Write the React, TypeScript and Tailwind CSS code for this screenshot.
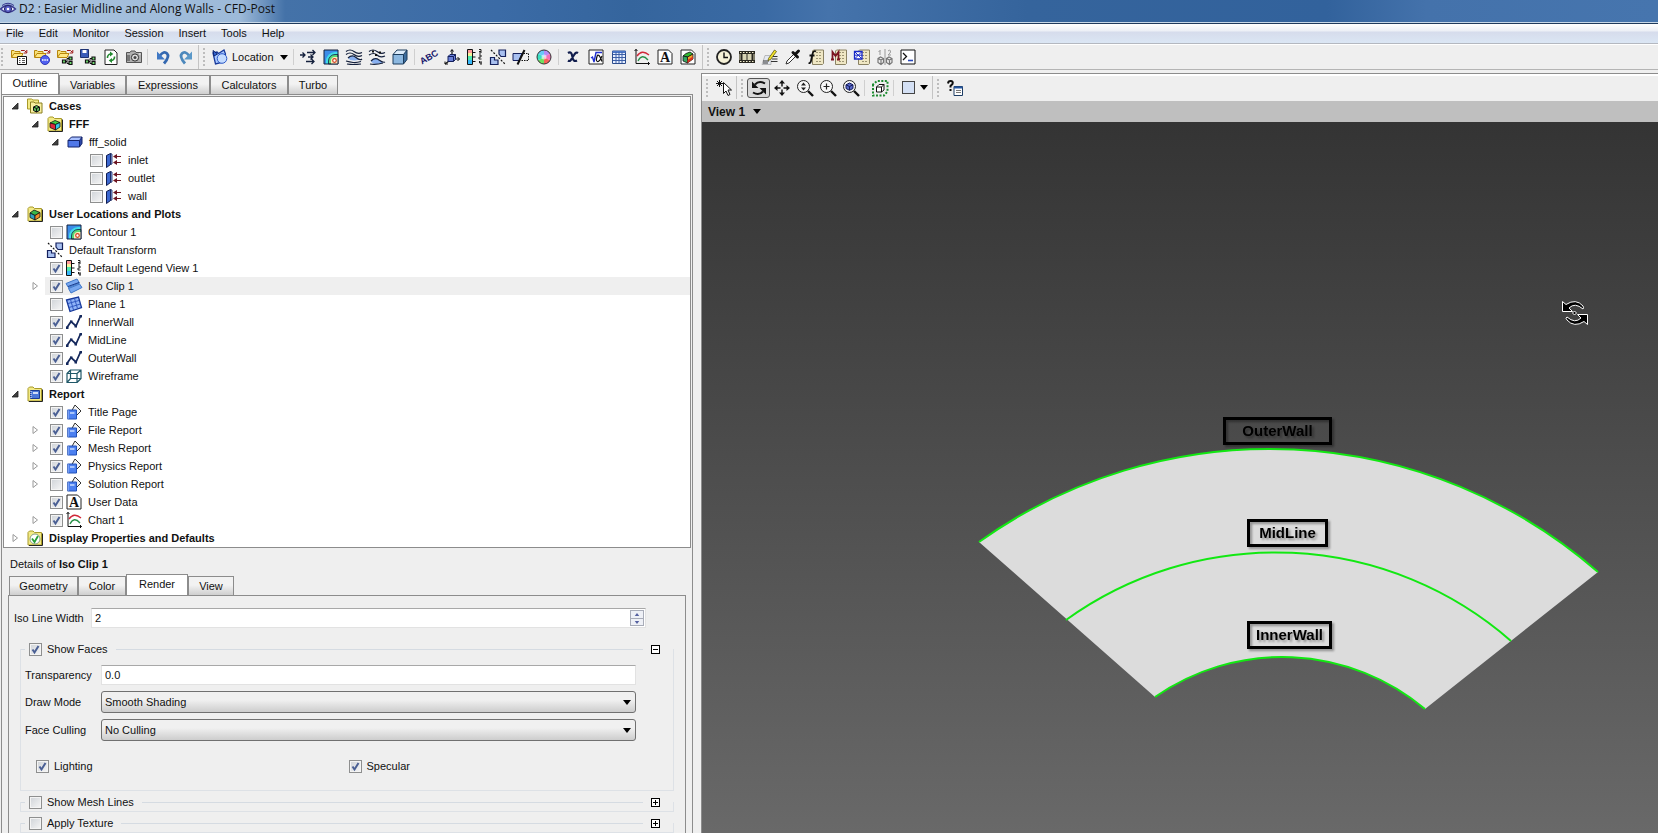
import { useState } from 'react';
import type { ReactNode } from 'react';
import clsx from 'clsx';

const folder = (
  <>
    <path d="M1 2.5 2.5 1H6l1.5 1.5h7V15H1z" fill="#f3ea86" stroke="#a89a2a" />
    <path d="M15.5 3.5v12H2" fill="none" stroke="#222" />
  </>
);

const openFolder = (
  <>
    <path d="M.5 8V1.5H3L4 2.5h5V4" fill="#f8e27a" stroke="#b8860b" />
    <path d="M.5 8.5 3 4.5h9L10 8.5z" fill="#ffe680" stroke="#b8860b" />
    <path d="M10 1.5h3.5l2 2M15.8 1v3h-3" fill="none" stroke="#a01818" />
  </>
);

const nodes = (
  <>
    <path d="M7 12.5h3M10 9.5v5M10 9.5h2M10 14.5h2" fill="none" stroke="#111" />
    <path d="M5.5 11h3v3h-3zM12 8h3v3h-3zM12 12.5h3v3h-3z" fill="#6fdc6f" stroke="#111" strokeWidth="1.2" />
  </>
);

const cube = (
  <>
    <path d="M3 7 8 4.5 13 6.5 8.5 8.5z" fill="#3fd03f" stroke="#111" strokeWidth=".8" />
    <path d="M3 7v4.5L8.5 14V8.5z" fill="#e0283c" stroke="#111" strokeWidth=".8" />
    <path d="M8.5 8.5V14L13 11V6.5z" fill="#35c8e8" stroke="#111" strokeWidth=".8" />
  </>
);

const sheet = <path d="M1 1h10.5L15 4.5V15H1z" fill="#fff" stroke="#222" />;

const calc = (
  <>
    <path d="M5.5 1h10v13.5l-1 1h-10V2z" fill="#efe7c4" stroke="#8a8263" />
    <path d="M8 3.5h6M8 6.5h6M8 9.5h6M8 12.5h6" stroke="#9c9474" strokeDasharray="2 1" />
  </>
);

const lens = (
  <>
    <circle cx="6.5" cy="6.5" r="6" fill="#f8f8f8" stroke="#222" />
    <path d="m11 11 5 5" stroke="#111" strokeWidth="2.4" />
  </>
);

const icons: Record<string, ReactNode> = {
  app: (
    <>
      <path d="M.5 8Q8 .5 15.5 8 8 15 .5 8z" fill="#e8ecff" stroke="#3a3a90" strokeWidth="1.4" />
      <circle cx="8" cy="8" r="3.6" fill="#5a60c8" stroke="#24246a" />
      <circle cx="8" cy="8" r="1.3" fill="#fff" />
      <path d="M2 4.5Q8 0 14 4.5" fill="none" stroke="#3a3a90" />
    </>
  ),
  loadResults: (
    <>
      {openFolder}
      <path d="M6.5 7.5h9v8h-9z" fill="#fff" stroke="#111" />
      <path d="M8 9.5h1.5M11 9.5h3M8 11.5h1.5M11 11.5h3M8 13.5h1.5M11 13.5h3" stroke="#555" />
    </>
  ),
  loadCase: (
    <>
      {openFolder}
      <circle cx="11" cy="11" r="4.5" fill="#5060f0" stroke="#3038b8" />
      <path d="M8 11h1.5M10.3 11h1.5M12.6 11h1.5" stroke="#fff" strokeWidth="1.4" />
    </>
  ),
  loadState: <>{openFolder}{nodes}</>,
  saveState: (
    <>
      <path d="M.5.5h8v8h-8z" fill="#3a5cb8" stroke="#1d3272" />
      <path d="M2.5 1h4v3h-4z" fill="#fff" />
      {nodes}
    </>
  ),
  refresh: (
    <>
      <path d="M2 1h9l3 3v11.5H2z" fill="#fff" stroke="#222" />
      <path d="M4.5 9a3.5 3.5 0 0 1 3-4M11.5 7.5a3.5 3.5 0 0 1-3 4" fill="none" stroke="#238a30" strokeWidth="1.6" />
      <path d="M7 2.5 10.3 5 7 7.5zM9 9 5.7 11.5 9 14z" fill="#238a30" />
    </>
  ),
  camera: (
    <>
      <path d="M.5 3.5H4L5 2h4l1 1.5h5.5v10H.5z" fill="#b0b0b0" stroke="#555" />
      <path d="M1 6h3v6H1z" fill="#777" />
      <circle cx="9" cy="8.5" r="3.6" fill="#ddd" stroke="#333" />
      <circle cx="9" cy="8.5" r="1.5" fill="#444" />
      <path d="M13 5h1.5" stroke="#fff" />
    </>
  ),
  undo: (
    <>
      <path d="M5 6.5Q9 1.5 12 4.5T9 14.5" fill="none" stroke="#3468b0" strokeWidth="2.8" />
      <path d="M2 2.5v8h8z" fill="#3f78c4" />
    </>
  ),
  redo: (
    <>
      <path d="M11 6.5Q7 1.5 4 4.5T7 14.5" fill="none" stroke="#4c88bc" strokeWidth="2.8" />
      <path d="M14 2.5v8H6z" fill="#5a98c8" />
    </>
  ),
  location: (
    <>
      <path d="m1 4 4-1 1.5 1.5L12 1l1.5 4-2 8-8 2z" fill="#a8c8ff" stroke="#16389a" strokeWidth="1.3" />
      <path d="M1 1.5 5.5 5 2 7z" fill="#3468d8" stroke="#0c2470" />
      <circle cx="10" cy="9.5" r="4.8" fill="#c4dcff" stroke="#2a58c8" />
    </>
  ),
  vector: (
    <path d="M0 6h5M2.5 3.500 5 6 2.500 8.500M7 3.500h8M12.500 1 15 3.500 12.500 6M8 8h5M10.500 5.500 13 8l-2.500 2.500M6 12.500h8M11.500 10l2.500 2.500-2.500 2.500" fill="none" stroke="#14203c" strokeWidth="1.3" />
  ),
  contour: (
    <>
      <path d="M1 1h14v14H1z" fill="#3c8ce8" />
      <path d="M3 15v-3a9 9 0 0 1 9-9h3v12z" fill="#40dce8" />
      <path d="M5.5 15v-3A6.500 6.500 0 0 1 12 5.500h3V15z" fill="#58d878" stroke="#124" strokeWidth=".8" />
      <path d="M8 15v-3a4 4 0 0 1 4-4h3v7z" fill="#ffeec0" />
      <circle cx="11.5" cy="11.5" r="1.8" fill="#fff" stroke="#d04020" strokeWidth="1.2" />
      <path d="M1 1h14v14H1z" fill="none" stroke="#14203c" />
    </>
  ),
  streamline: (
    <>
      <path d="M2 9Q6 5 10 8.5l5 2-6 1Q4 12 2 9z" fill="#88b0f0" />
      <path d="M0 2.5Q4-.5 8 2.5t8 1M0 5.5q4-3 8 0t8 1M2 9Q6 5 10 8.5T16 10M0 12q4 1 7 1.500t8-1M1 15q6 1 14 0" fill="none" stroke="#14203c" strokeWidth="1.2" />
    </>
  ),
  particle: (
    <>
      <path d="M2 12Q5 8 9 10.5l5 3L8 15q-5 0-6-3z" fill="#88b0f0" />
      <path d="M0 2.5q4-3 8 0t8 1M0 6q5-3 8 0t8 1M2 12q4-4 8-1t6 2M1 15q6 1 13-1" fill="none" stroke="#14203c" strokeWidth="1.2" />
      <path d="M3 1.5h2v2H3zM10 2.5h2v2h-2zM6 5h2v2H6z" fill="#111" />
    </>
  ),
  volume: (
    <>
      <path d="M1 5.5 5 1h10l-3.5 4.5z" fill="#dcecfa" />
      <path d="M11.5 5.5 15 1v9.5L11.5 15z" fill="#3c6c9c" />
      <path d="M1 5.5h10.5V15H1z" fill="#8cb8e0" />
      <path d="M1 5.5 5 1h10v9.5L11.5 15H1zM1 5.5h10.5V15M11.5 5.5 15 1" fill="none" stroke="#1c3c5c" />
    </>
  ),
  text: (
    <text x="8" y="11" textAnchor="middle" fontSize="9" fontWeight="bold" fill="#18186c" fontFamily="Liberation Sans, sans-serif" transform="rotate(-30 8 8)">
      ABC
    </text>
  ),
  coord: (
    <>
      <path d="M8 6V1M10 10h5.5M5 12l-4 3" stroke="#111" strokeWidth="1.2" />
      <path d="m6.5 2.5 1.5-2 1.5 2M13.5 8l2 2-2 2M1 12.5V15h3" fill="none" stroke="#111" />
      <path d="m4 7.5 2-2h5.5v5l-2 2H4z" fill="#6a80d8" stroke="#14205c" />
      <path d="M4 7.5h5.5v5M9.5 7.5l2-2" fill="none" stroke="#14205c" />
    </>
  ),
  legend: (
    <>
      <path d="M1 1h4.5v3H1z" fill="#ff9a9a" />
      <path d="M1 4h4.5v3H1z" fill="#f4f29a" />
      <path d="M1 7h4.5v4H1z" fill="#50e8b0" />
      <path d="M1 11h4.5v4H1z" fill="#38b8f8" />
      <path d="M.5.5h5v15h-5zM6 3.5h2.5M6 8h2.5M6 12.5h2.5" fill="none" stroke="#111" />
      <path d="M12 .5h2V4h-2M12 2.500h2M12 6h2v2h-2v2h2.500M12.500 12v2H15M14 12v4" fill="none" stroke="#222" />
    </>
  ),
  transform: (
    <>
      <path d="m1 1 14 14" stroke="#111" strokeWidth="1.2" strokeDasharray="2 1.5" />
      <path d="M9 1h6.5v6.5H11L9 5z" fill="#a8c0f0" stroke="#14205c" strokeWidth="1.2" />
      <path d="M.5 8.5h4V11H8v4.5H.5z" fill="#a8c0f0" stroke="#14205c" strokeWidth="1.2" />
    </>
  ),
  clip: (
    <>
      <path d="M0 4.5h9l-3 7H0z" fill="#a8c0f0" stroke="#14205c" />
      <path d="M10.5 4.5h5v7H8" fill="none" stroke="#111" strokeDasharray="1.5 1" />
      <path d="m11.5 1-7 14.5" stroke="#111" strokeWidth="2" />
    </>
  ),
  colormap: (
    <>
      <path d="M8 8V1a7 7 0 0 1 6 3.5z" fill="#b48cf8" />
      <path d="m8 8 6-3.5a7 7 0 0 1 0 7z" fill="#f470b8" />
      <path d="m8 8 6 3.5A7 7 0 0 1 8 15z" fill="#f86058" />
      <path d="M8 8v7a7 7 0 0 1-6-3.5z" fill="#70e060" />
      <path d="m8 8-6 3.5a7 7 0 0 1 0-7z" fill="#38e0c0" />
      <path d="M8 8 2 4.5A7 7 0 0 1 8 1z" fill="#68c8f8" />
      <circle cx="8" cy="8" r="2.5" fill="#fff" opacity=".6" />
      <circle cx="8" cy="8" r="7" fill="none" stroke="#333" />
    </>
  ),
  variable: (
    <path d="M3 4q3-2 4 2l1 4q1 3 4 1.5M13 4q-2-1.500-4 2l-2.500 4Q5 13 3 11.500" fill="none" stroke="#101c4c" strokeWidth="2.2" />
  ),
  expression: (
    <>
      <path d="M1 1h14v14H1z" fill="#fff" stroke="#222" />
      <path d="m3 9 1.5-1L6 13l2-9.5h6" fill="none" stroke="#2030d0" strokeWidth="1.4" />
      <path d="M14 7q-2.5 6-4.500 5.500T9 7.500t5 5" fill="none" stroke="#111" strokeWidth="1.2" />
    </>
  ),
  table: (
    <>
      <path d="M1.5 2h13v12.5h-13z" fill="#e8f0ff" stroke="#2c4c8c" />
      <path d="M1.5 2h13v2h-13z" fill="#4c78c8" />
      <path d="M2 5.5h12M2 8.5h12M2 11.5h12M5 3v11M8 3v11M11 3v11" stroke="#3c60a8" />
    </>
  ),
  chart: (
    <>
      <path d="M2 0v14.5h13.5M.5 2 2 .5 3.5 2M14 13l1.5 1.5L14 16" fill="none" stroke="#111" />
      <path d="M3 7q5-7 12-1" fill="none" stroke="#d02838" strokeWidth="1.3" />
      <path d="M4 12q4-8 10-1" fill="none" stroke="#289048" strokeWidth="1.3" />
    </>
  ),
  comment: (
    <>
      {sheet}
      <text x="8" y="13" fontSize="14" fontWeight="bold" textAnchor="middle" fill="#111" fontFamily="Liberation Serif, serif">
        A
      </text>
    </>
  ),
  figure: (
    <>
      {sheet}
      <path d="m3 7 3-2.5L10 3l3 2-5 3z" fill="#30b830" stroke="#111" strokeWidth=".8" />
      <path d="M3 7v5l4.5 2V8z" fill="#30a860" stroke="#111" strokeWidth=".8" />
      <path d="M7.5 8 13 5v5l-5.5 4z" fill="#f0a828" stroke="#111" strokeWidth=".8" />
      <path d="M7.5 11 13 7.5V10l-5.5 4z" fill="#d83020" />
    </>
  ),
  clock: (
    <>
      <circle cx="8" cy="8" r="7" fill="#f6f2d8" stroke="#222" strokeWidth="1.8" />
      <path d="M8 3.5v5h4" fill="none" stroke="#111" strokeWidth="1.4" />
    </>
  ),
  film: (
    <>
      <path d="M0 2h16v12H0z" fill="#2a2820" />
      <path d="M3.5 5h4v6h-4zM8.5 5h4v6h-4z" fill="#d8d4b4" />
      <path d="M1 3.5h14M1 12.5h14" stroke="#f4f0d0" strokeDasharray="1.5 1.5" />
      <path d="M1 5v6M15 5v6" stroke="#d8d4b4" />
    </>
  ),
  quick: (
    <>
      <path d="M3 6.5h6v9H0z" fill="#e4e8f0" stroke="#999" strokeWidth=".6" />
      <path d="M11 7.5h4.5M10 10h5.5M9 12.5h6.5M1 12h6M1 14h5" stroke="#333" />
      <path d="m6.5 9.5 6-8.5 2 1.5-6 8-2.5 1z" fill="#f4e428" stroke="#5a5410" strokeWidth=".8" />
    </>
  ),
  probe: (
    <>
      <path d="m1 15 1-3 7-7 2 2-7 7z" fill="#fff" stroke="#333" />
      <path d="M8 3.5 12.5 8M10 5.5 13.5 2" stroke="#111" strokeWidth="3" strokeLinecap="round" />
    </>
  ),
  funcCalc: (
    <>
      {calc}
      <path d="M8 2.5Q5.5 1 4.5 5L3 12q-.5 2.5-2.5 2M1.5 6.5h5" fill="none" stroke="#111" strokeWidth="1.8" />
    </>
  ),
  macroCalc: (
    <>
      {calc}
      <path d="M1.5 10.5V3l3 4 3-4v7.5M0 10.5h3M6 10.5h3" fill="none" stroke="#7c1420" strokeWidth="1.8" />
    </>
  ),
  meshCalc: (
    <>
      {calc}
      <path d="M.5 2.5H8V10H.5z" fill="#fff" stroke="#1828c8" strokeWidth="1.3" />
      <path d="M.5 2.5 8 10M8 2.5.5 10M.5 6.2H8" stroke="#1828c8" />
    </>
  ),
  compare: (
    <>
      <path d="M8 0v16M3 1v5M11 2q2-2 2.5 0T11 6h3M1.5 3 3 1.5" fill="none" stroke="#999" />
      <path d="M1 9.5 3.5 8l3 1.5v4L4 15.5l-3-2zM1 9.5 4 11l2.5-1.5M4 11v4.5M9.5 9.5 12 8l3 1.5v4l-2.5 2-3-2zM9.5 9.5l3 1.5L15 9.5M12.5 11v4.5" fill="none" stroke="#777" strokeWidth="1.2" />
    </>
  ),
  command: (
    <>
      <path d="M1 1h14v14H1z" fill="#fff" stroke="#111" />
      <path d="m3 4 3.5 3.5L3 11" fill="none" stroke="#111" strokeWidth="1.3" />
      <path d="M8 11.5h5" stroke="#2848b8" strokeWidth="1.6" />
    </>
  ),
  pick: (
    <>
      <path d="M3.5 0v7M0 3.5h7M1 1l5 5M6 1 1 6" stroke="#111" />
      <path d="M7.5 2.5v11L10 11l2 4.5 2-1-2-4.500h3.500z" fill="#fff" stroke="#111" />
    </>
  ),
  rotate: (
    <>
      <path d="M4 4.5Q8 0 14 3.5M12 11.5Q8 16 2 12.5" fill="none" stroke="#111" strokeWidth="2" />
      <path d="M1 1.5V8h6.500zM15 14.500V8H8.500z" fill="#111" />
    </>
  ),
  pan: (
    <>
      <path d="M8 3v3.5M8 9.5V13M3 8h3.5M9.5 8H13" stroke="#111" strokeWidth="1.4" />
      <path d="m8 0 3 3.5H5zM8 16l3-3.5H5zM0 8l3.5-3v6zM16 8l-3.5-3v6z" fill="#111" />
    </>
  ),
  zoom: <>{lens}<path d="M6.5 2.5 9 5.5H4zM6.5 10.5 9 7.500H4z" fill="#222" /></>,
  zoomBox: <>{lens}<path d="M6.5 3.5v6M3.5 6.5h6" stroke="#222" strokeWidth="1.2" /></>,
  fit: (
    <>
      {lens}
      <path d="M3 4.8 6.5 3 10 4.8v3.7l-3.5 1.800L3 8.500z" fill="#5868c8" stroke="#141c5c" />
      <path d="m3 4.8 3.5 1.7L10 4.800M6.500 6.500v3.800" fill="none" stroke="#141c5c" />
    </>
  ),
  region: (
    <>
      <path d="M1 4.5v11h11l3.5-4V1H5z" fill="none" stroke="#1c8c30" strokeWidth="2" strokeDasharray="2 1.5" />
      <path d="M4.5 7h5v5h-5zM4.5 7 7 4.5h5V10l-2.500 2M9.500 7 12 4.500" fill="#fff" stroke="#111" />
    </>
  ),
  help: (
    <>
      <path d="M1 3.5Q1.5.5 4 1t1.500 3l-2 2v1.500M3.500 9v2" fill="none" stroke="#111" strokeWidth="2" />
      <path d="M7 6.5h8.5v9H7z" fill="#fff" stroke="#1c3c64" />
      <path d="M7 7.5h8.5" stroke="#2858a0" strokeWidth="2" />
      <path d="M9 10.5h5M9 12.5h5" stroke="#777" />
    </>
  ),
  cases: (
    <>
      <path d="M.5 11V1h4L6 2h5.5v9z" fill="#f3ea86" stroke="#a89a2a" />
      <path d="M3.5 15V4H7l1 1h7v10z" fill="#f7efa0" stroke="#8a7e20" />
      <path d="m6.5 9 3-1.5 3 1.5v3.500l-3 1.500-3-1.500z" fill="#58b858" stroke="#111" />
      <path d="m6.5 9 3 1.5 3-1.5M9.500 10.500V14" fill="none" stroke="#111" />
    </>
  ),
  caseFolder: <>{folder}{cube}</>,
  plots: (
    <>
      {folder}
      <path d="m3 7 4-3 6 2.500-5 3z" fill="#38b848" stroke="#111" strokeWidth=".8" />
      <path d="M3 7v4.5L8 14V9.5z" fill="#30a0c0" stroke="#111" strokeWidth=".8" />
      <path d="M8 9.5V14l5-3V6.5z" fill="#f08c28" stroke="#111" strokeWidth=".8" />
    </>
  ),
  solid: (
    <>
      <path d="M1 6.5 4.5 3H15l-2.5 3.500z" fill="#a8c0ff" />
      <path d="M1 6.5h11.5V13H1z" fill="#5078e8" />
      <path d="M12.5 6.5 15 3v6.5L12.5 13z" fill="#2c48a8" />
      <path d="M1 6.5 4.5 3H15v6.5L12.5 13H1zM1 6.5h11.5V13M12.5 6.5 15 3" fill="none" stroke="#14246c" />
    </>
  ),
  boundary: (
    <>
      <path d="m.5 3.5 4-2v11l-4 3z" fill="#3c68d0" stroke="#101c50" />
      <path d="M4.5 1.5 6 2v10l-1.5.5z" fill="#90b0f8" stroke="#101c50" strokeWidth=".8" />
      <path d="M8.5 4.5H15M8.5 10.5H15" stroke="#6c1420" strokeWidth="1.2" />
      <path d="m7 4.5 4-2.5v5zM7 10.5 11 8v5z" fill="#6c1420" />
    </>
  ),
  isoclip: (
    <>
      <path d="m0 6 11-5 5 8.500L5 15z" fill="#90b8f0" />
      <path d="M0 5.500 11 1l2.500 4L2.500 9.500zM2.500 10.500l11-4.500L16 9.500 5 15z" fill="#78a8f0" stroke="#4078c8" />
      <path d="m2 8.500 11-4" stroke="#1c3c8c" />
    </>
  ),
  plane: (
    <>
      <path d="m.5 4 12-3 3 10.5-11.500 4z" fill="#90b4f8" stroke="#16389a" strokeWidth="1.3" />
      <path d="m4.5 3.5 3 10.5M8.5 2.5l3 10M2 7.5l11-3M3 11.5 14.5 8" stroke="#3058c0" />
    </>
  ),
  line: (
    <>
      <path d="m1 13.5 4-6 5 4.500 4.500-10" fill="none" stroke="#14285c" strokeWidth="1.8" />
      <path d="M0 12.5h2.5V15H0zM4 6.5h2.5V9H4zM8.5 11H11v2.5H8.500zM13.500 1H16v2.500h-2.500z" fill="#14285c" />
    </>
  ),
  wireframe: (
    <path d="M1 5.5h10v9H1zM4.5 2H15v8.5H4.500zM1 5.500 4.500 2M11 5.500 15 2M1 14.500l3.500-4M11 14.500l4-4" fill="none" stroke="#205868" strokeWidth="1.2" />
  ),
  report: (
    <>
      {folder}
      <path d="M3.5 4.5h9v8h-9z" fill="#4c78d8" stroke="#1c3c94" />
      <path d="M6 7h5" stroke="#fff" strokeWidth="1.5" />
      <path d="M4 5v8" stroke="#fff" strokeDasharray="1 1" />
    </>
  ),
  page: (
    <>
      <path d="m9 1 6 6-6 6-4-5z" fill="#f4f4f4" stroke="#333" />
      <path d="M1.5 6h9v9h-9z" fill="#4c80f0" stroke="#2050b8" />
      <path d="M4 9h4.5" stroke="#c8dcff" strokeWidth="1.5" />
      <path d="M2 6.5V15" stroke="#fff" strokeDasharray="1 1" />
    </>
  ),
  display: (
    <>
      {folder}
      <circle cx="8" cy="9" r="5" fill="#fff" stroke="#88a088" />
      <path d="M5 8.5 7.5 12 11 6" fill="none" stroke="#28a038" strokeWidth="1.8" />
    </>
  ),
};

const Icon = ({ name }: { name: string }) => (
  <svg viewBox="0 0 16 16" className="size-4 shrink-0 overflow-visible" aria-hidden="true">
    {icons[name]}
  </svg>
);

const Caret = () => (
  <svg viewBox="0 0 8 5" className="h-[5px] w-2 shrink-0" aria-hidden="true">
    <path d="M0 0h8L4 5z" fill="#000" />
  </svg>
);

const Handle = () => <div className="mx-1 h-[18px] w-0 border-l-2 border-dotted border-[#bdbdbd]" />;

const Separator = () => <div className="mr-[3px] ml-[2px] h-4 w-px bg-[#cfcfcf]" />;

const ToolButton = ({ name, active = false }: { name: string; active?: boolean }) => (
  <button
    type="button"
    aria-label={name}
    className={clsx(
      'flex h-5 w-[23px] shrink-0 items-center justify-center',
      active && 'rounded-[3px] border border-[#555] bg-[#d9d9d9]'
    )}
  >
    <Icon name={name} />
  </button>
);

interface CheckProps {
  id: string;
  checked?: boolean;
}

const Check = ({ id, checked = false }: CheckProps) => {
  const [on, setOn] = useState(checked);

  return (
    <span className="inline-grid size-[13px] shrink-0">
      <input
        id={id}
        type="checkbox"
        checked={on}
        onChange={() => setOn(!on)}
        className="col-start-1 row-start-1 size-[13px] appearance-none border border-[#8e8f8f] bg-gradient-to-br from-[#cfd3d8] to-[#f6f6f6] shadow-[inset_0_0_0_1px_#f4f4f4]"
      />
      {on && (
        <svg viewBox="0 0 13 13" className="pointer-events-none col-start-1 row-start-1 size-[13px]" aria-hidden="true">
          <path d="m3.5 6.5 2 3 4-6.500" fill="none" stroke="#4a5f94" strokeWidth="2" />
        </svg>
      )}
    </span>
  );
};

interface TreeItem {
  label: string;
  icon: string;
  depth: number;
  arrow?: 'open' | 'closed';
  check?: boolean;
  bold?: boolean;
  selected?: boolean;
}

const tree: TreeItem[] = [
  { label: 'Cases', icon: 'cases', depth: 0, arrow: 'open', bold: true },
  { label: 'FFF', icon: 'caseFolder', depth: 1, arrow: 'open', bold: true },
  { label: 'fff_solid', icon: 'solid', depth: 2, arrow: 'open' },
  { label: 'inlet', icon: 'boundary', depth: 3, check: false },
  { label: 'outlet', icon: 'boundary', depth: 3, check: false },
  { label: 'wall', icon: 'boundary', depth: 3, check: false },
  { label: 'User Locations and Plots', icon: 'plots', depth: 0, arrow: 'open', bold: true },
  { label: 'Contour 1', icon: 'contour', depth: 1, check: false },
  { label: 'Default Transform', icon: 'transform', depth: 1 },
  { label: 'Default Legend View 1', icon: 'legend', depth: 1, check: true },
  { label: 'Iso Clip 1', icon: 'isoclip', depth: 1, arrow: 'closed', check: true, selected: true },
  { label: 'Plane 1', icon: 'plane', depth: 1, check: false },
  { label: 'InnerWall', icon: 'line', depth: 1, check: true },
  { label: 'MidLine', icon: 'line', depth: 1, check: true },
  { label: 'OuterWall', icon: 'line', depth: 1, check: true },
  { label: 'Wireframe', icon: 'wireframe', depth: 1, check: true },
  { label: 'Report', icon: 'report', depth: 0, arrow: 'open', bold: true },
  { label: 'Title Page', icon: 'page', depth: 1, check: true },
  { label: 'File Report', icon: 'page', depth: 1, arrow: 'closed', check: true },
  { label: 'Mesh Report', icon: 'page', depth: 1, arrow: 'closed', check: true },
  { label: 'Physics Report', icon: 'page', depth: 1, arrow: 'closed', check: true },
  { label: 'Solution Report', icon: 'page', depth: 1, arrow: 'closed', check: false },
  { label: 'User Data', icon: 'comment', depth: 1, check: true },
  { label: 'Chart 1', icon: 'chart', depth: 1, arrow: 'closed', check: true },
  { label: 'Display Properties and Defaults', icon: 'display', depth: 0, arrow: 'closed', bold: true },
];

const indent = ['pl-px', 'pl-[21px]', 'pl-[41px]', 'pl-[61px]'];

const TreeRow = ({ item }: { item: TreeItem }) => {
  const id = `tree-${item.label.replace(/\s+/g, '-').toLowerCase()}`;
  const text = clsx('ml-1.5 whitespace-nowrap', item.bold && 'font-bold');

  return (
    <li className={clsx('flex h-[18px]', indent[item.depth])}>
      <span className="flex w-5 shrink-0 items-center justify-center">
        {item.arrow && (
          <button type="button" aria-label={`Toggle ${item.label}`}>
            <svg viewBox="0 0 8 8" className="size-2" aria-hidden="true">
              {item.arrow === 'open' ? (
                <path d="M7 1v6H1z" fill="#404040" stroke="#222" strokeWidth=".8" />
              ) : (
                <path d="M2 .5v7L6.5 4z" fill="#fff" stroke="#999" />
              )}
            </svg>
          </button>
        )}
      </span>
      <span className={clsx('flex flex-1 items-center pl-0.5', item.selected && 'bg-[#efefef]')}>
        {item.check !== undefined && (
          <span className="mx-[3px] flex">
            <Check id={id} checked={item.check} />
          </span>
        )}
        <Icon name={item.icon} />
        {item.check !== undefined ? (
          <label htmlFor={id} className={text}>{item.label}</label>
        ) : (
          <span className={text}>{item.label}</span>
        )}
      </span>
    </li>
  );
};

const Tab = ({ label, active, width, onClick }: { label: string; active: boolean; width: string; onClick: () => void }) => (
  <button
    type="button"
    role="tab"
    aria-selected={active}
    onClick={onClick}
    className={clsx(
      'border-x border-t border-[#8c8c8c] text-center whitespace-nowrap',
      width,
      active ? 'h-[21px] bg-white pb-0.5' : 'h-[19px] bg-gradient-to-b from-[#f2f2f2] from-45% to-[#cfcfcf]'
    )}
  >
    {label}
  </button>
);

const outlineTabs = [
  { label: 'Outline', width: 'w-[58px]' },
  { label: 'Variables', width: 'w-[67px]' },
  { label: 'Expressions', width: 'w-[84px]' },
  { label: 'Calculators', width: 'w-[78px]' },
  { label: 'Turbo', width: 'w-[50px]' },
];

const detailTabs = [
  { label: 'Geometry', width: 'w-[69px]' },
  { label: 'Color', width: 'w-[48px]' },
  { label: 'Render', width: 'w-[62px]' },
  { label: 'View', width: 'w-[46px]' },
];

const Outline = () => {
  const [tab, setTab] = useState('Outline');

  return (
    <>
      <div role="tablist" className="flex h-[21px] shrink-0 items-end">
        {outlineTabs.map((t) => (
          <Tab key={t.label} {...t} active={tab === t.label} onClick={() => setTab(t.label)} />
        ))}
      </div>
      <div className="flex min-h-0 flex-1 flex-col border border-b-0 border-[#8c8c8c] p-px pb-0">
        <ul className="border border-[#8c8c8c] bg-white">
          {tree.map((item) => (
            <TreeRow key={item.label} item={item} />
          ))}
        </ul>
        <Details />
      </div>
    </>
  );
};

const Expander = ({ label, open = false }: { label: string; open?: boolean }) => (
  <button
    type="button"
    aria-label={label}
    aria-expanded={open}
    className="mr-3.5 ml-2 flex size-[9px] shrink-0 items-center justify-center border border-black bg-white"
  >
    <svg viewBox="0 0 5 5" className="size-[5px]" aria-hidden="true">
      <path d={open ? 'M0 2.5h5' : 'M0 2.5h5M2.5 0v5'} stroke="#000" />
    </svg>
  </button>
);

interface GroupProps {
  id: string;
  label: string;
  open?: boolean;
  children?: ReactNode;
}

// The title row carries its own rules, so the frame reads as broken around the label
const Group = ({ id, label, open = false, children }: GroupProps) => (
  <div role="group" aria-labelledby={`${id}-label`} className="flex flex-col">
    <div className="flex h-4 items-center">
      <span className="mr-1 h-0 w-[5px] border-t border-[#d5dbe2]" />
      <Check id={id} checked={open} />
      <label id={`${id}-label`} htmlFor={id} className="mr-2 ml-[5px]">{label}</label>
      <span className="h-0 flex-1 border-t border-[#d5dbe2]" />
      <Expander label={`Toggle ${label}`} open={open} />
    </div>
    <div className={clsx('-mt-2 border-x border-b border-[#dde1e6]', open ? 'pt-4 pb-[17px]' : 'h-2.5')}>{children}</div>
  </div>
);

const SelectField = ({ id, label, options }: { id: string; label: string; options: string[] }) => (
  <>
    <label htmlFor={id}>{label}</label>
    <span className="grid items-center">
      <select
        id={id}
        className="col-start-1 row-start-1 h-[22px] w-full appearance-none rounded-[3px] border border-[#707070] bg-gradient-to-b from-[#f0f0f0] from-40% to-[#cdcdcd] px-[3px]"
      >
        {options.map((o) => (
          <option key={o}>{o}</option>
        ))}
      </select>
      <span className="pointer-events-none col-start-1 row-start-1 mr-[5px] justify-self-end">
        <Caret />
      </span>
    </span>
  </>
);

const Details = () => {
  const [tab, setTab] = useState('Render');

  return (
    <section className="flex min-h-0 flex-1 flex-col px-[5px] pt-2">
      <h2 className="pl-0.5 leading-[16px]">
        Details of <b>Iso Clip 1</b>
      </h2>
      <div role="tablist" className="mt-0.5 flex h-[21px] shrink-0 items-end pl-px">
        {detailTabs.map((t) => (
          <Tab key={t.label} {...t} active={tab === t.label} onClick={() => setTab(t.label)} />
        ))}
      </div>
      <div className="min-h-0 flex-1 overflow-hidden border border-b-0 border-[#8c8c8c] px-[5px] pt-3">
        <div className="mr-[34px] flex items-center">
          <label htmlFor="line-width" className="w-[77px] whitespace-nowrap">Iso Line Width</label>
          <div className="flex h-5 flex-1 items-center border border-[#e2e2e2] border-t-[#a8a8a8] bg-white">
            <input id="line-width" type="text" defaultValue="2" className="h-full min-w-0 flex-1 px-[3px] outline-none" />
            <div className="mr-px flex flex-col border border-[#a8acb8]">
              <button type="button" aria-label="Increase line width" className="flex h-[7px] w-3 items-center justify-center bg-[#eef0f6]">
                <svg viewBox="0 0 6 4" className="h-[3px] w-1.5" aria-hidden="true"><path d="m3 0 3 4H0z" fill="#5560a0" /></svg>
              </button>
              <button type="button" aria-label="Decrease line width" className="flex h-[7px] w-3 items-center justify-center border-t border-[#a8acb8] bg-[#eef0f6]">
                <svg viewBox="0 0 6 4" className="h-[3px] w-1.5" aria-hidden="true"><path d="M0 0h6L3 4z" fill="#5560a0" /></svg>
              </button>
            </div>
          </div>
        </div>
        <div className="mt-[13px] flex flex-col gap-[3px] px-[6px]">
          <Group id="show-faces" label="Show Faces" open>
            <div className="mr-[37px] ml-1 grid grid-cols-[76px_1fr] items-center gap-y-[6px]">
              <label htmlFor="transparency">Transparency</label>
              <input
                id="transparency"
                type="text"
                defaultValue="0.0"
                className="h-5 min-w-0 border border-[#e2e2e2] border-t-[#a8a8a8] bg-white px-[3px] outline-none"
              />
              <SelectField id="draw-mode" label="Draw Mode" options={['Smooth Shading', 'Flat Shading', 'None']} />
              <SelectField id="face-culling" label="Face Culling" options={['No Culling', 'Front Faces', 'Back Faces']} />
            </div>
            <div className="mt-[18px] mr-3 ml-[15px] grid grid-cols-2">
              <span className="flex items-center">
                <Check id="lighting" checked />
                <label htmlFor="lighting" className="ml-[5px]">Lighting</label>
              </span>
              <span className="flex items-center">
                <Check id="specular" checked />
                <label htmlFor="specular" className="ml-[5px]">Specular</label>
              </span>
            </div>
          </Group>
          <Group id="mesh-lines" label="Show Mesh Lines" />
          <Group id="texture" label="Apply Texture" />
        </div>
      </div>
    </section>
  );
};

const sceneLabels = [
  { text: 'OuterWall', x: 522, y: 296, w: 107 },
  { text: 'MidLine', x: 546, y: 398, w: 79 },
  { text: 'InnerWall', x: 546, y: 500, w: 83 },
];

const Scene = () => (
  <div className="min-h-0 flex-1 bg-gradient-to-b from-[#343434] to-[#696969]">
    <svg viewBox="0 0 956 711" className="size-full" role="img" aria-label="Curved bar geometry">
      <path d="M277 420A500 500 0 0 1 896 450L723 587A222 222 0 0 0 453 575z" fill="#dcdcdc" />
      <g fill="none" stroke="#12e812" strokeWidth="2">
        <path d="M277 420A500 500 0 0 1 896 450" />
        <path d="M364 498A358 358 0 0 1 809 519" />
        <path d="M453 575A222 222 0 0 1 723 587" />
      </g>
      {sceneLabels.map((l) => (
        <g key={l.text} className="drop-shadow-[2px_2px_1px_rgba(0,0,0,0.35)]">
          <rect x={l.x + 0.5} y={l.y + 0.5} width={l.w - 1} height="25" fill="none" stroke="#000" strokeWidth="3" />
          <text x={l.x + l.w / 2} y={l.y + 18} textAnchor="middle" className="text-[15px] font-bold">
            {l.text}
          </text>
        </g>
      ))}
      <g fill="#000" stroke="#fff">
        <path d="M860.5 179.5v10h10L867 186q6-6 14 1 1-1 0-3-7-8-17-1.500z" />
        <path d="M885.5 202.5v-10h-10L879 196q-6 6-14-1-2 1 0 3 7 8 17 1.500z" />
        <path d="m872.5 189 2 2-2 2-2-2z" />
      </g>
    </svg>
  </div>
);

const menus = ['File', 'Edit', 'Monitor', 'Session', 'Insert', 'Tools', 'Help'];

const ViewPanel = () => (
  <main className="flex min-w-0 flex-col border-t border-l border-[#8c8c8c]">
    <div className="flex h-[27px] shrink-0 items-center border-t-2 border-white pb-0.5">
      <Handle />
      <ToolButton name="pick" />
      <div className="ml-px h-full w-px bg-[#c4c4c4]" />
      <Handle />
      <ToolButton name="rotate" active />
      <ToolButton name="pan" />
      <ToolButton name="zoom" />
      <ToolButton name="zoomBox" />
      <ToolButton name="fit" />
      <Separator />
      <ToolButton name="region" />
      <Separator />
      <button type="button" aria-label="Viewport layout" className="flex w-[35px] items-center justify-center gap-[5px]">
        <span className="size-[13px] border border-[#444] bg-[#d4e0f4]" />
        <Caret />
      </button>
      <div className="h-full w-px bg-[#c4c4c4]" />
      <Handle />
      <ToolButton name="help" />
    </div>
    <div className="flex h-[21px] shrink-0 items-center bg-[#bfbfbf] pl-[6px]">
      <button type="button" className="flex items-center gap-2 text-[12px] font-bold">
        View 1 <Caret />
      </button>
    </div>
    <Scene />
  </main>
);

const App = () => {
  return (
    <div className="flex h-screen flex-col overflow-hidden bg-[#efefef] font-['Liberation_Sans',Arial,sans-serif] text-[11px] leading-[14px] text-[#111]">
      <header className="flex h-[23px] shrink-0 items-center border-b border-[#c8d8e8] bg-[linear-gradient(90deg,#a9c3df_0,#9dbad9_240px,#4472a8_285px,#3b6ba6_30%,#35659d_38%,#3a6aa4_46%,#4573ab_50%,#35649c_62%,#32629c_80%,#4472ab_86%,#4675ae_100%)] pb-1">
        <Icon name="app" />
        <h1 className="ml-[3px] font-['Open_Sans','Noto_Sans',sans-serif] text-[12px] leading-[18px] whitespace-nowrap">
          D2 : Easier Midline and Along Walls - CFD-Post
        </h1>
      </header>

      <nav className="flex h-[21px] shrink-0 items-center gap-[15px] border-t border-b border-t-[#1f3a5c] border-b-[#b4b8c0] bg-[linear-gradient(180deg,#ffffff_0,#eceff6_7px,#d6dcec_8px,#dbe6f4_100%)] pb-px pl-[6px]">
        {menus.map((m) => (
          <button key={m} type="button">{m}</button>
        ))}
      </nav>

      <div className="flex h-[26px] shrink-0 items-center border-t border-b border-t-white border-b-[#b4b4b4]">
        <div className="-ml-[3px] flex items-center">
          <Handle />
          {['loadResults', 'loadCase', 'loadState', 'saveState', 'refresh', 'camera'].map((n) => (
            <ToolButton key={n} name={n} />
          ))}
          <Separator />
          <ToolButton name="undo" />
          <ToolButton name="redo" />
        </div>
        <div className="ml-px h-full w-px bg-[#c4c4c4]" />
        <Handle />
        <button type="button" className="flex items-center pl-[3px]">
          <Icon name="location" />
          <span className="mr-[6px] ml-1">Location</span>
          <Caret />
        </button>
        <span className="w-[3px]" />
        <Separator />
        {['vector', 'contour', 'streamline', 'particle', 'volume'].map((n) => (
          <ToolButton key={n} name={n} />
        ))}
        <Separator />
        {['text', 'coord', 'legend', 'transform', 'clip', 'colormap'].map((n) => (
          <ToolButton key={n} name={n} />
        ))}
        <Separator />
        {['variable', 'expression', 'table', 'chart', 'comment', 'figure'].map((n) => (
          <ToolButton key={n} name={n} />
        ))}
        <div className="ml-[2px] h-full w-px bg-[#c4c4c4]" />
        <Handle />
        {['clock', 'film', 'quick', 'probe', 'funcCalc', 'macroCalc', 'meshCalc', 'compare', 'command'].map((n) => (
          <ToolButton key={n} name={n} />
        ))}
      </div>

      <div className="grid min-h-0 flex-1 grid-cols-[701fr_957fr] pt-[3px]">
        <aside className="mr-[8px] ml-px flex min-h-0 min-w-0 flex-col">
          <Outline />
        </aside>
        <ViewPanel />
      </div>
    </div>
  );
};

export default App;
